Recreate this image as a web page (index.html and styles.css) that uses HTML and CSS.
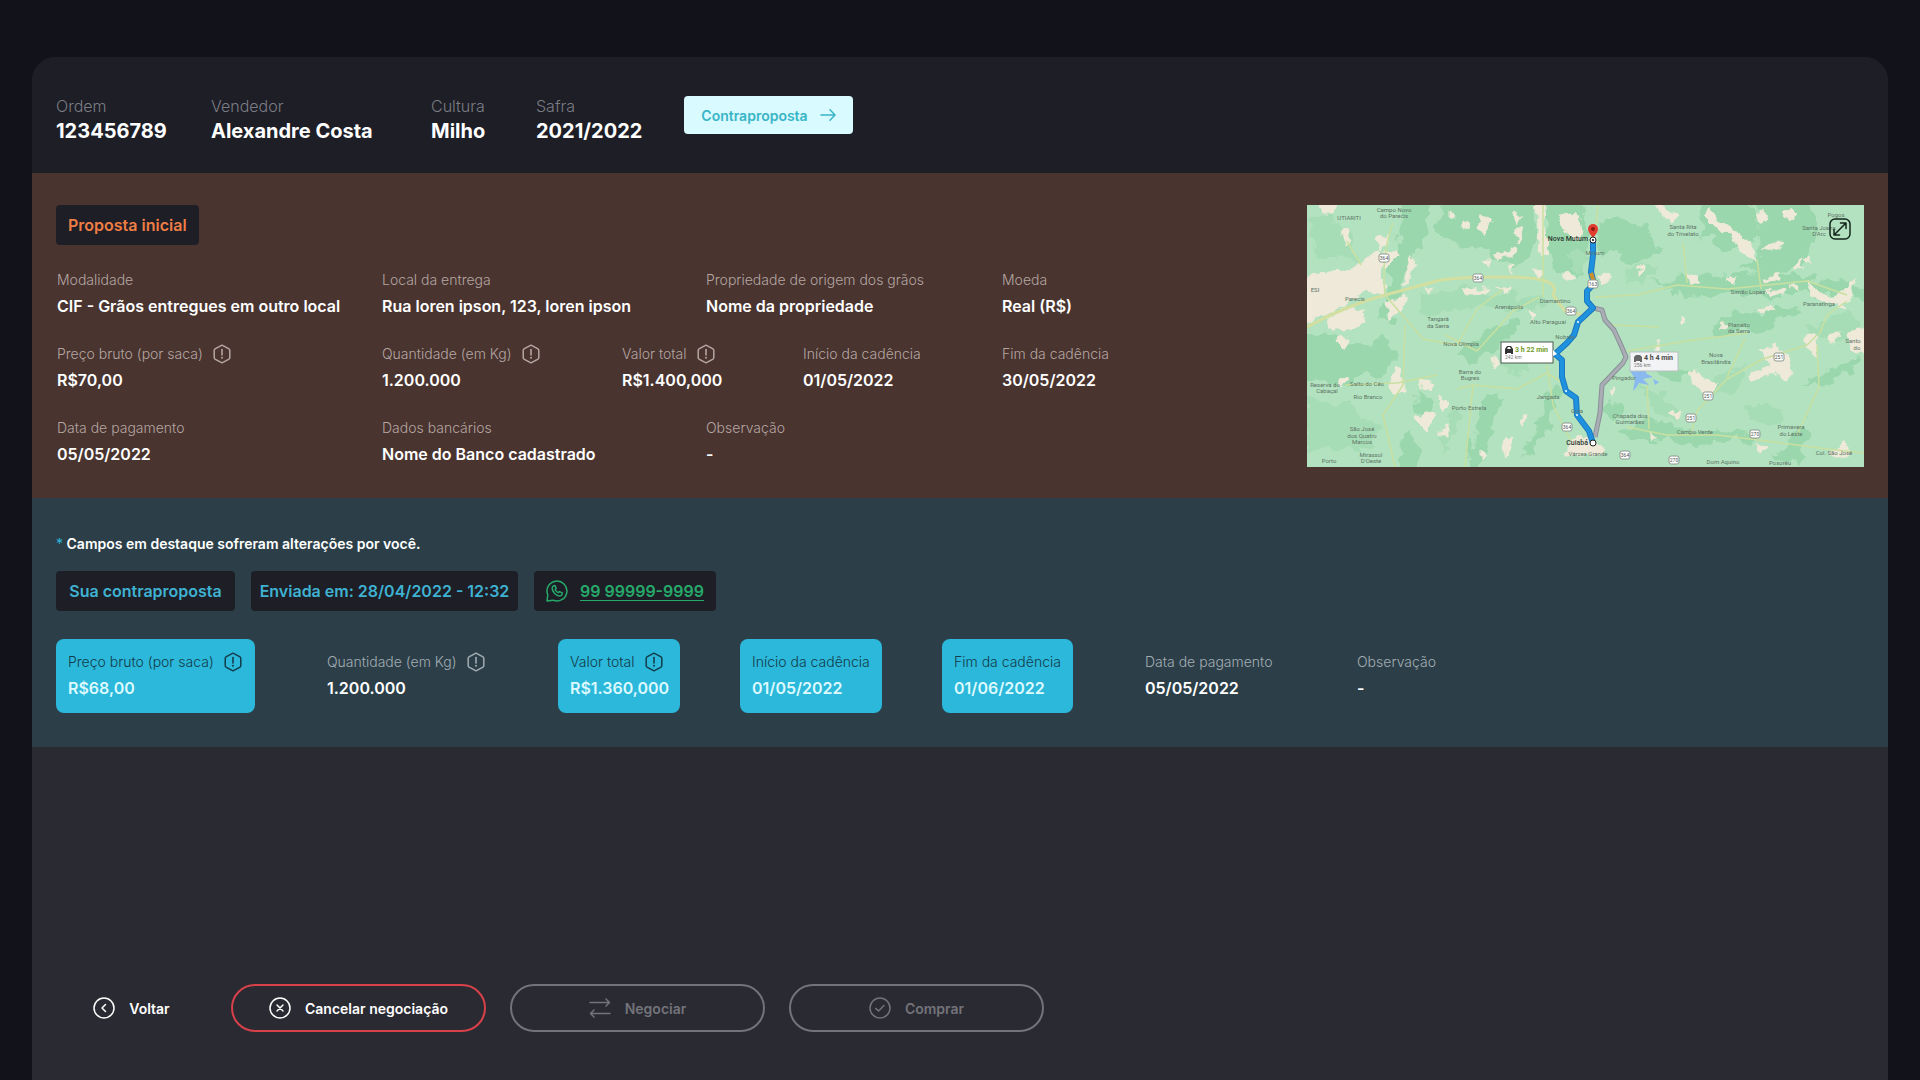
FILE: index.html
```html
<!DOCTYPE html>
<html lang="pt-BR">
<head>
<meta charset="utf-8">
<meta name="viewport" content="width=device-width, initial-scale=1">
<title>Negociação 123456789</title>
<link rel="stylesheet" href="styles.css">
</head>
<body>
<svg class="sprite" aria-hidden="true">
  <symbol id="info" viewBox="0 0 18 20"><path d="M9 1.2 15.6 4.6Q16.8 5.3 16.8 6.6V13.4Q16.8 14.7 15.6 15.4L9 18.8 2.4 15.4Q1.2 14.7 1.2 13.4V6.6Q1.2 5.3 2.4 4.6Z" fill="none" stroke="currentColor" stroke-width="1.5" stroke-linejoin="round"/><path d="M9 5.5V11" stroke="currentColor" stroke-width="1.6" stroke-linecap="round"/><circle cx="9" cy="13.8" r="1" fill="currentColor"/></symbol>
</svg>
<main class="panel">
  <header class="summary">
    <dl class="summary-list">
      <div><dt>Ordem</dt><dd>123456789</dd></div>
      <div><dt>Vendedor</dt><dd>Alexandre Costa</dd></div>
      <div><dt>Cultura</dt><dd>Milho</dd></div>
      <div><dt>Safra</dt><dd>2021/2022</dd></div>
    </dl>
    <button class="counter" type="button">Contraproposta
      <svg width="16" height="14" viewBox="0 0 16 14" fill="none" stroke="currentColor" stroke-width="1.5" stroke-linecap="round" stroke-linejoin="round"><path d="M1 7H15M10 1.8 15 7 10 12.2"/></svg>
    </button>
  </header>

  <section class="initial">
    <div class="details">
      <h2 class="tag tag-orange">Proposta inicial</h2>
      <dl class="grid">
        <div class="field c1"><dt>Modalidade</dt><dd>CIF - Grãos entregues em outro local</dd></div>
        <div class="field c2 wide"><dt>Local da entrega</dt><dd>Rua loren ipson, 123, loren ipson</dd></div>
        <div class="field c4 wide"><dt>Propriedade de origem dos grãos</dt><dd>Nome da propriedade</dd></div>
        <div class="field c6"><dt>Moeda</dt><dd>Real (R$)</dd></div>
        <div class="field c1"><dt>Preço bruto (por saca) <svg class="info"><use href="#info"/></svg></dt><dd>R$70,00</dd></div>
        <div class="field c2"><dt>Quantidade (em Kg) <svg class="info"><use href="#info"/></svg></dt><dd>1.200.000</dd></div>
        <div class="field c3 wide"><dt>Valor total <svg class="info"><use href="#info"/></svg></dt><dd>R$1.400,000</dd></div>
        <div class="field c5"><dt>Início da cadência</dt><dd>01/05/2022</dd></div>
        <div class="field c6"><dt>Fim da cadência</dt><dd>30/05/2022</dd></div>
        <div class="field c1"><dt>Data de pagamento</dt><dd>05/05/2022</dd></div>
        <div class="field c2 wide"><dt>Dados bancários</dt><dd>Nome do Banco cadastrado</dd></div>
        <div class="field c4 wide"><dt>Observação</dt><dd>-</dd></div>
      </dl>
    </div>
    <div class="map">
      <svg class="map-art" viewBox="0 0 557 262" preserveAspectRatio="xMidYMid slice" role="img" aria-label="Rota entre Nova Mutum e Cuiabá">
        <defs>
          <filter id="terrain" x="0" y="0" width="557" height="262" filterUnits="userSpaceOnUse">
            <feTurbulence type="fractalNoise" baseFrequency="0.06" numOctaves="3" seed="4" result="n"/>
            <feDisplacementMap in="SourceGraphic" in2="n" scale="22" xChannelSelector="R" yChannelSelector="G"/>
          </filter>
          <filter id="clearing" x="0" y="0" width="557" height="262" filterUnits="userSpaceOnUse">
            <feTurbulence type="fractalNoise" baseFrequency="0.12" numOctaves="2" seed="9" result="n"/>
            <feDisplacementMap in="SourceGraphic" in2="n" scale="9" xChannelSelector="R" yChannelSelector="G"/>
          </filter>
        </defs>
        <rect width="557" height="262" fill="#b2e2bf"/>
        <g fill="#9bd7ac" filter="url(#terrain)">
          <path d="M-20 122 22 128 50 140 84 136 94 150 76 170 50 172 28 182-20 176ZM88-20H130L120 28 104 58 92 84 84 118 72 116 82 84 80 58 96 28ZM138-20H226L228 52 210 62 176 46 150 38 130 26ZM240-20H270L282 40 276 72 248 70 238 46Z"/>
          <path d="M150 150 176 130 206 116 214 122 190 142 166 160ZM160 280 170 214 186 184 196 190 184 226 172 280ZM96 280 94 226 102 220 112 240 110 280ZM232 212 250 178 254 184 240 222 222 254 216 250ZM110 186 126 196 122 214 108 206Z"/>
          <path d="M288 16 316 12 340 24 350 48 330 60 306 46 292 50ZM384-20H440L452 28 438 48 414 44 396 26ZM448-20H500L510 34 494 60 462 70 430 60 452 50ZM346 78 400 68 470 66 530 78 580 86V96L500 86 440 92 390 92Z"/>
          <path d="M400 120 430 106 480 102 494 110 450 124 408 134ZM360 86 376 84 372 94 362 93ZM300 196 318 200 314 212 298 208ZM338 150 372 160 390 170 370 172 340 164ZM310 222 350 216 400 228 440 226 450 234 390 238 330 234ZM496 180 524 164 552 150 554 158 518 180ZM466 252 498 218 506 224 490 258Z"/>
        </g>
        <g fill="#a7ddb6" filter="url(#terrain)">
          <path d="M0 14 20 8 40 26 52 62 30 50 8 58ZM110 92 150 84 200 88 240 98 216 108 160 102 116 108ZM0 192 40 200 70 220 60 250 20 240 0 250ZM320 60 350 64 344 76 318 80ZM500 120 540 110 557 118V134L520 136ZM330 180 360 190 372 214 352 210Z"/>
          <path d="M128 232 150 200 156 206 138 246ZM196 140 228 150 214 168 190 162ZM400 174 440 160 436 178 402 194ZM440 200 478 206 470 222 444 216ZM266 44 280 52 274 70 262 64Z"/>
        </g>
        <g fill="#eee9d8" stroke="#eee9d8" stroke-linejoin="round" filter="url(#clearing)">
          <path d="M-9 76 14 68 44 64 62 50 70 44 76 56 72 70 80 82 76 92 60 84 36 102 22 108-9 122ZM20 114 40 104 56 106 58 118 44 124 22 124ZM12-4 32-4 26 8 16 8ZM34 24 42 22 42 34 38 42ZM70 34 80 30 82 40 72 44ZM68 50 90 44 92 50 78 64ZM100 64 104 50 108 56 102 78 96 80ZM80 96 100 92 96 102 82 116ZM32 130 42 134 38 144 30 136Z"/>
          <path d="M82 184 88 160 94 164 98 184 88 188ZM32 172 42 174 34 182ZM112 174 128 178 124 186 114 182ZM132 190 142 200 138 206 133 200ZM108 214 124 206 130 212 118 224ZM134 222 142 220 142 232 134 232ZM198 234 206 230 200 252 196 242ZM212 214 220 208 216 222ZM186 152 194 158 188 166ZM174 244 178 248 174 256Z"/>
          <path d="M228-4H238L237 22 242 50 230 48 232 24ZM252 8 272 10 276 28 268 34 256 24ZM174 12 184 14 178 32 172 24ZM206 6 214 12 210 20ZM208 24 216 20 212 38ZM142 4 148 12 142 12ZM156 16 162 20 156 24ZM194 50 208 42 206 52ZM254 72 262 66 270 72 262 76ZM226 64 236 66 230 72ZM156 84 182 84 178 88 160 89ZM201 62 206 60 205 68ZM190 82 204 84 202 90ZM222 104 228 110 224 116ZM118 82 126 84 122 90ZM176 56 184 56 182 60ZM188 48 198 51 192 54Z"/>
          <path d="M396 10 404 4 410 18 424 22 444 40 448 56 440 52 428 40 424 28 412 26ZM346-4 372 12 366 18 354 12ZM448 10 456 4 460 14 454 18ZM456 44 472 36 478 38 466 46ZM476 6 482 2 490 10 484 16ZM486 62 496 50 494 64ZM498 54 504 52 502 60ZM332 60 338 58 336 64ZM380 68 388 72 394 78 384 78ZM330 60 340 60 336 68ZM292 74 302 68 304 74 296 78ZM420 74 426 72 426 80ZM456 76 474 68 472 74 458 78ZM500 76 508 84 524 94 540 84 548 72 544 92 536 98 540 104 522 96 504 90Z"/>
          <path d="M458 86 478 84 476 90 462 90ZM482 82 490 80 492 86ZM450 104 466 102 456 108ZM412 116 420 118 414 126ZM494 134 508 128 512 142 508 152 500 142ZM520 130 532 128 530 138 522 140ZM540 130 552 122 566 126V150L546 146ZM454 146 468 140 482 152 484 168 478 176 468 168 444 176 442 170 462 160ZM382 166 400 174 410 182 402 190 388 180ZM362 208 374 206 372 214ZM388 162 392 170 386 168ZM450 240 460 242 454 248ZM300 184 308 182 304 190ZM344 228 350 232 344 236ZM332 66 336 68 332 72ZM374 112 378 118 374 120ZM522 250 540 238 542 250ZM256 250 270 230 296 242 294 250ZM350 135 354 142 350 146Z"/>
        </g>
        <g fill="none" stroke="#c9e0a0" stroke-width="1.5" stroke-linejoin="round">
          <path d="M0 122Q40 100 78 90T130 76 200 72 246 90L258 106 276 110" stroke="#d3dfa0" stroke-width="3"/>
          <path d="M86 18Q74 50 78 90L116 134 150 140 170 104 196 84M138 130 170 146 206 106 232 92M98 120 96 180 76 210 88 262M150 184 166 180 158 262M166 180 210 184 240 168 256 178M240 160 246 200 264 236M130 170 90 178 38 180M236 0 236 92M54 60 40 36"/>
          <path d="M291 0 288 30M288 92 330 90 370 80 420 84 500 76 540 90M376 38 380 78M450 54 454 84M320 146 380 136 440 128M340 180 342 224M390 206 420 174 456 154 500 140 510 130M510 140 512 182 490 230M320 222 360 230 410 230 460 236 520 244 557 248M390 206 384 228M438 134 420 172M540 96 520 110 512 130M304 120 352 122"/>
        </g>
        <path d="M322 164 330 166 336 162 340 169 346 172 336 174 342 180 332 178 329 183 326 186 328 174ZM338 148 344 150 340 154ZM346 174 352 177 348 180Z" fill="#8ab9ef"/>
        <path d="M286 103 295 105 298 115 307 125 313 138 319 152 316 158 295 180 293 208 288 232" fill="none" stroke="#8b8f99" stroke-width="5" stroke-linejoin="round"/>
        <path d="M286 103 295 105 298 115 307 125 313 138 319 152 316 158 295 180 293 208 288 232" fill="none" stroke="#a9aeb5" stroke-width="3" stroke-linejoin="round"/>
        <path d="M286 34 286 50 284 67 287 79 280 86 280 96 286 103 271 117 267 130 260 138 248 149 255 155 255 172 259 186 269 193 270 210 282 226 286 238" fill="none" stroke="#1a77c0" stroke-width="6" stroke-linejoin="round"/>
        <path d="M286 34 286 50 284 67 287 79 280 86 280 96 286 103 271 117 267 130 260 138 248 149 255 155 255 172 259 186 269 193 270 210 282 226 286 238" fill="none" stroke="#1e92de" stroke-width="4" stroke-linejoin="round"/>
        <path d="M284 68 287 77" stroke="#c9922e" stroke-width="4"/>
        <g fill="#fff"><circle cx="271" cy="117" r="1"/><circle cx="259" cy="186" r="1"/><circle cx="270" cy="210" r="1"/></g>
        <g fill="#fff" stroke="#8d9890">
          <rect x="72" y="49" width="10" height="8" rx="2"/><rect x="166" y="69" width="10" height="8" rx="2"/><rect x="259" y="102" width="10" height="8" rx="2"/><rect x="255" y="218" width="10" height="8" rx="2"/><rect x="281" y="75" width="10" height="8" rx="2"/><rect x="467" y="148" width="10" height="8" rx="2"/><rect x="396" y="187" width="10" height="8" rx="2"/><rect x="379" y="209" width="10" height="8" rx="2"/><rect x="443" y="225" width="10" height="8" rx="2"/><rect x="313" y="246" width="10" height="8" rx="2"/><rect x="362" y="251" width="10" height="8" rx="2"/>
        </g>
        <g class="road">
          <text x="77" y="55">364</text><text x="171" y="75">364</text><text x="264" y="108">364</text><text x="260" y="224">364</text><text x="286" y="81">163</text><text x="472" y="154">251</text><text x="401" y="193">251</text><text x="384" y="215">251</text><text x="448" y="231">270</text><text x="318" y="252">364</text><text x="367" y="257">270</text>
        </g>
        <g class="town">
          <text x="87" y="7">Campo Novo</text><text x="87" y="13">do Parecis</text><text x="42" y="15">UTIARITI</text><text x="8" y="87">ESI</text><text x="48" y="96">Parecis</text><text x="131" y="116">Tangará</text><text x="131" y="123">da Serra</text><text x="154" y="141">Nova Olímpia</text><text x="202" y="104">Arenápolis</text><text x="248" y="98">Diamantino</text><text x="241" y="119">Alto Paraguai</text><text x="258" y="134">Nobres</text><text x="163" y="169">Barra do</text><text x="163" y="175">Bugres</text><text x="162" y="205">Porto Estrela</text><text x="60" y="181">Salto do Céu</text><text x="61" y="194">Rio Branco</text><text x="18" y="182">Reserva do</text><text x="20" y="188">Cabaçal</text><text x="55" y="226">São José</text><text x="55" y="233">dos Quatro</text><text x="55" y="239">Marcos</text><text x="64" y="252">Mirassol</text><text x="64" y="258">D'Oeste</text><text x="22" y="258">Porto</text><text x="241" y="194">Jangada</text><text x="270" y="208">Guia</text><text x="288" y="50">Mutum</text><text x="281" y="251">Várzea Grande</text>
          <text x="376" y="24">Santa Rita</text><text x="376" y="31">do Trivelato</text><text x="529" y="12">Pogos</text><text x="512" y="25">Santa Joana</text><text x="512" y="31">D'Arc</text><text x="441" y="89">Simão Lopes</text><text x="512" y="101">Paranatinga</text><text x="432" y="122">Planalto</text><text x="432" y="128">da Serra</text><text x="409" y="152">Nova</text><text x="409" y="159">Brasilândia</text><text x="546" y="138">Santo</text><text x="550" y="145">do</text><text x="317" y="175">Pingador</text><text x="323" y="213">Chapada dos</text><text x="323" y="219">Guimarães</text><text x="388" y="229">Campo Verde</text><text x="484" y="224">Primavera</text><text x="484" y="231">do Leste</text><text x="527" y="250">Col. São José</text><text x="416" y="259">Dom Aquino</text><text x="473" y="260">Poxoréu</text>
        </g>
        <g class="city"><text x="281" y="36">Nova Mutum</text><text x="281" y="240">Cuiabá</text></g>
        <path d="M286 33Q281 27 281 24A5 5 0 0 1 291 24Q291 27 286 33Z" fill="#e33b2e"/><circle cx="286" cy="24" r="2" fill="#8d1b13"/>
        <g fill="#fff" stroke="#222"><circle cx="286" cy="35" r="3"/><circle cx="286" cy="238" r="3"/></g><circle cx="286" cy="35" r="1"/>
        <rect x="194" y="137" width="52" height="21" fill="#fff" stroke="#4c5a50"/><path d="M246 145 250 149 246 151Z" fill="#fff"/>
        <path d="M198 149V144L200 141H204L206 144V149H204V148H200V149ZM200 144H204L203 142H201Z" fill="#333"/>
        <text class="time time-best" x="208" y="147">3 h 22 min</text><text class="km" x="198" y="154">242 km</text>
        <rect x="323" y="147" width="48" height="19" fill="#f2f3f4" stroke="#b9bfc0"/>
        <path d="M327 157V152L329 150H333L335 152V157H333V156H329V157Z" fill="#666"/>
        <text class="time" x="337" y="155">4 h 4 min</text><text class="km" x="327" y="162">256 km</text>
      </svg>
      <button class="expand" type="button" aria-label="Expandir mapa">
        <svg width="22" height="22" viewBox="0 0 22 22" fill="none" stroke="#14261c" stroke-width="1.5" stroke-linecap="round" stroke-linejoin="round"><rect x="1" y="1" width="20" height="20" rx="5"/><path d="M5.5 16.5 16.5 5.5M11.5 5H17V10.5M5 11.5V17H10.5"/></svg>
      </button>
    </div>
  </section>

  <section class="offer">
    <p class="note"><span>*</span> Campos em destaque sofreram alterações por você.</p>
    <div class="tags">
      <h2 class="tag tag-cyan t1">Sua contraproposta</h2>
      <p class="tag tag-cyan t2">Enviada em: 28/04/2022 - 12:32</p>
      <p class="tag t3">
        <svg width="22" height="22" viewBox="0 0 22 22" fill="none" stroke="#27a96a" stroke-width="1.5" stroke-linejoin="round"><path d="M1 21 1.8 15A10 10 0 1 1 7 20.200Z"/><path d="M7.5 5.8 9 5.6 10.2 8.4 9.2 9.8Q10 11.6 12.2 12.7L13.5 11.6 16.3 12.9Q16.4 15.3 14.3 15.9 11.6 16.4 8.7 13.5 6 10.6 6.2 8.2 6.4 6.6 7.5 5.8Z"/></svg>
        <a href="tel:99999999999">99 99999-9999</a>
      </p>
    </div>
    <dl class="changes">
      <div class="field hot"><dt>Preço bruto (por saca) <svg class="info"><use href="#info"/></svg></dt><dd>R$68,00</dd></div>
      <div class="field"><dt>Quantidade (em Kg) <svg class="info"><use href="#info"/></svg></dt><dd>1.200.000</dd></div>
      <div class="field hot"><dt>Valor total <svg class="info"><use href="#info"/></svg></dt><dd>R$1.360,000</dd></div>
      <div class="field hot"><dt>Início da cadência</dt><dd>01/05/2022</dd></div>
      <div class="field hot"><dt>Fim da cadência</dt><dd>01/06/2022</dd></div>
      <div class="field"><dt>Data de pagamento</dt><dd>05/05/2022</dd></div>
      <div class="field"><dt>Observação</dt><dd>-</dd></div>
    </dl>
  </section>

  <footer class="actions">
    <button class="btn btn-back" type="button"><svg class="ico" viewBox="0 0 22 22"><circle cx="11" cy="11" r="10"/><path d="M12.5 7.5 9 11 12.5 14.5"/></svg>Voltar</button>
    <button class="btn btn-cancel" type="button"><svg class="ico" viewBox="0 0 22 22"><circle cx="11" cy="11" r="10"/><path d="M8 8 14 14M14 8 8 14"/></svg>Cancelar negociação</button>
    <button class="btn" type="button" disabled><svg class="ico" viewBox="0 0 22 22"><path d="M1 5.5H20.5M17 2 20.5 5.5 17 9M21 16.5H1.5M5 13 1.5 16.5 5 20"/></svg>Negociar</button>
    <button class="btn" type="button" disabled><svg class="ico" viewBox="0 0 22 22"><circle cx="11" cy="11" r="10"/><path d="M6.8 11.4 9.5 14 15 8.5"/></svg>Comprar</button>
  </footer>
</main>
</body>
</html>
```

FILE: styles.css
```css
* { box-sizing: border-box; }
body {
  margin: 0;
  min-height: 100vh;
  padding: 57px 32px 0;
  background: #12121a;
  color: #fff;
  font-family: Inter, "Open Sans", sans-serif;
  font-size: 16px;
}
h2, p, dl, dd { margin: 0; }
button { font: inherit; cursor: pointer; }
.sprite { position: absolute; width: 0; height: 0; }

.panel {
  display: flex;
  flex-direction: column;
  min-height: calc(100vh - 57px);
  border-radius: 24px 24px 0 0;
  overflow: hidden;
  background: #2a2a32;
}

.summary {
  display: flex;
  align-items: flex-start;
  min-height: 116px;
  padding: 39px 24px 24px;
  background: #1d1e26;
}
.summary-list { display: grid; grid-template-columns: 155px 220px 105px 148px; }
.summary-list dt { color: #7c7d84; font-weight: 300; line-height: 20px; }
.summary-list dd { font-size: 20px; font-weight: 700; line-height: 30px; }
.counter {
  display: flex;
  align-items: center;
  justify-content: center;
  gap: 12px;
  width: 169px;
  height: 38px;
  padding: 0;
  border: 0;
  border-radius: 4px;
  background: #d9faff;
  color: #38b5c6;
  font-size: 14px;
  font-weight: 600;
}

.initial {
  display: flex;
  align-items: flex-start;
  justify-content: space-between;
  gap: 24px;
  padding: 32px 24px 30px;
  background: #493430;
}
.tag {
  display: flex;
  align-items: center;
  justify-content: center;
  gap: 12px;
  width: fit-content;
  height: 40px;
  padding: 0 12px;
  border-radius: 4px;
  background: #1d1e26;
  font-size: 16px;
  font-weight: 600;
  white-space: nowrap;
}
.tag-orange { color: #ee7d45; }
.tag-cyan { color: #3fb2d2; }

.grid {
  display: grid;
  grid-template-columns: 325px 240px 84px 97px 199px auto;
  row-gap: 22px;
  margin-top: 23px;
  padding-left: 1px;
}
.c1 { grid-column: 1; }
.c2 { grid-column: 2; }
.c3 { grid-column: 3; }
.c4 { grid-column: 4; }
.c5 { grid-column: 5; }
.c6 { grid-column: 6; }
.c2.wide { grid-column: 2 / span 2; }
.c3.wide { grid-column: 3 / span 2; }
.c4.wide { grid-column: 4 / span 2; }
.field { white-space: nowrap; }
.field dt {
  display: flex;
  align-items: center;
  gap: 10px;
  color: #b5a6a2;
  font-size: 14px;
  font-weight: 300;
  line-height: 24px;
}
.field dd { font-weight: 600; line-height: 28px; }
.info { width: 18px; height: 20px; }

.map { position: relative; flex: 0 1 557px; height: 262px; }
.map-art { position: absolute; inset: 0; width: 100%; height: 100%; }
.map-art text { font-family: Roboto, sans-serif; }
.town, .road { text-anchor: middle; }
.town { fill: #5f7568; font-size: 6px; }
.road { fill: #4c544f; font-size: 5px; }
.city { fill: #2f3a34; font-size: 7px; font-weight: 500; text-anchor: end; }
.time { fill: #4a4a4a; font-size: 7px; font-weight: 700; }
.time-best { fill: #6f9b25; }
.km { fill: #777; font-size: 5px; }
.expand {
  position: absolute;
  top: 13px;
  right: 13px;
  display: flex;
  padding: 0;
  border: 0;
  background: none;
}

.offer { padding: 36px 24px 34px; background: #2c3f49; }
.note { font-size: 14px; font-weight: 600; line-height: 20px; }
.note span { color: #2cb8da; font-weight: 400; }
.tags { display: flex; gap: 16px; margin-top: 17px; }
.t1 { width: 179px; }
.t2 { width: 267px; padding: 0; }
.t3 { width: 182px; }
.t3 a { color: #27a96a; text-underline-offset: 3px; }
.changes {
  display: grid;
  grid-template-columns: 199px 183px 122px 142px 131px 152px auto;
  justify-content: start;
  gap: 60px;
  margin-top: 28px;
}
.changes .field { padding: 11px 12px; border-radius: 8px; }
.changes dt { color: #a3adb3; }
.changes .hot { background: #2cb8da; }
.changes .hot dt { color: #123c4b; }
.changes .hot dd { color: #dcfaff; }

.actions {
  display: flex;
  gap: 24px;
  margin-top: auto;
  padding: 48px 24px;
}
.btn {
  display: flex;
  align-items: center;
  justify-content: center;
  gap: 14px;
  width: 255px;
  height: 48px;
  padding: 0;
  border: 2px solid #73737a;
  border-radius: 24px;
  background: none;
  color: #fff;
  font-size: 14px;
  font-weight: 600;
}
.btn:disabled { color: #73737a; cursor: default; }
.btn-back { width: 151px; border-color: transparent; }
.btn-cancel { border-color: #d9414a; }
.ico {
  width: 22px;
  height: 22px;
  fill: none;
  stroke: currentColor;
  stroke-width: 1.5;
  stroke-linecap: round;
  stroke-linejoin: round;
}
```
